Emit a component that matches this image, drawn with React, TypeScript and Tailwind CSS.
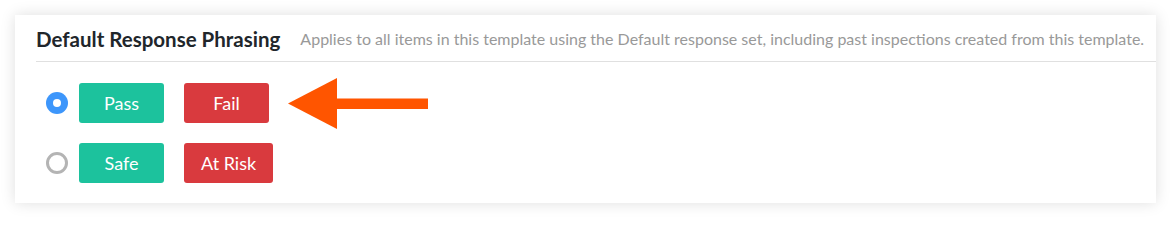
import React from "react";

function Radio({ checked }: { checked: boolean }) {
  return checked ? (
    <span className="flex h-[22px] w-[22px] shrink-0 items-center justify-center rounded-full bg-[#3d96fb]">
      <span className="h-[8px] w-[8px] rounded-full bg-white" />
    </span>
  ) : (
    <span className="h-[22px] w-[22px] shrink-0 rounded-full border-[3px] border-[#b4b4b4] bg-white" />
  );
}

function Btn({ label, tone }: { label: string; tone: "pass" | "fail" }) {
  return (
    <span
      className={
        "flex h-[40px] min-w-[85px] items-center justify-center rounded-[3px] px-[17px] text-[18px] leading-none text-white " +
        (tone === "pass" ? "bg-[#1cc29d]" : "bg-[#d93a3e]")
      }
    >
      {label}
    </span>
  );
}

export default function App() {
  return (
    <div className="h-[218px] w-[1171px] bg-white p-[15px]" style={{ fontFamily: "Lato, 'Open Sans', sans-serif" }}>
      <div className="h-[188px] w-[1141px] bg-white pl-[21px] shadow-[0_0_14px_rgba(0,0,0,0.13)]">
        <div className="flex h-[47px] items-center gap-[20px] border-b border-[#e0e0e0] pt-[2px]">
          <span className="text-[20.5px] font-bold text-[#21262b]">Default Response Phrasing</span>
          <span className="text-[16px] text-[#999999]">
            Applies to all items in this template using the Default response set, including past inspections created from this template.
          </span>
        </div>
        <div className="flex flex-col gap-[20px] pl-[10px] pt-[21px]">
          <div className="flex h-[40px] items-center">
            <Radio checked />
            <div className="ml-[11px] flex items-center gap-[20px]">
              <Btn label="Pass" tone="pass" />
              <Btn label="Fail" tone="fail" />
            </div>
            <svg className="ml-[19px] shrink-0" width="141" height="51" viewBox="0 0 141 51">
              <polygon points="0,25.5 49,0 49,51" fill="#ff5500" />
              <rect x="48" y="20.5" width="92" height="10.5" fill="#ff5500" />
            </svg>
          </div>
          <div className="flex h-[40px] items-center">
            <Radio checked={false} />
            <div className="ml-[11px] flex items-center gap-[20px]">
              <Btn label="Safe" tone="pass" />
              <Btn label="At Risk" tone="fail" />
            </div>
          </div>
        </div>
      </div>
    </div>
  );
}
